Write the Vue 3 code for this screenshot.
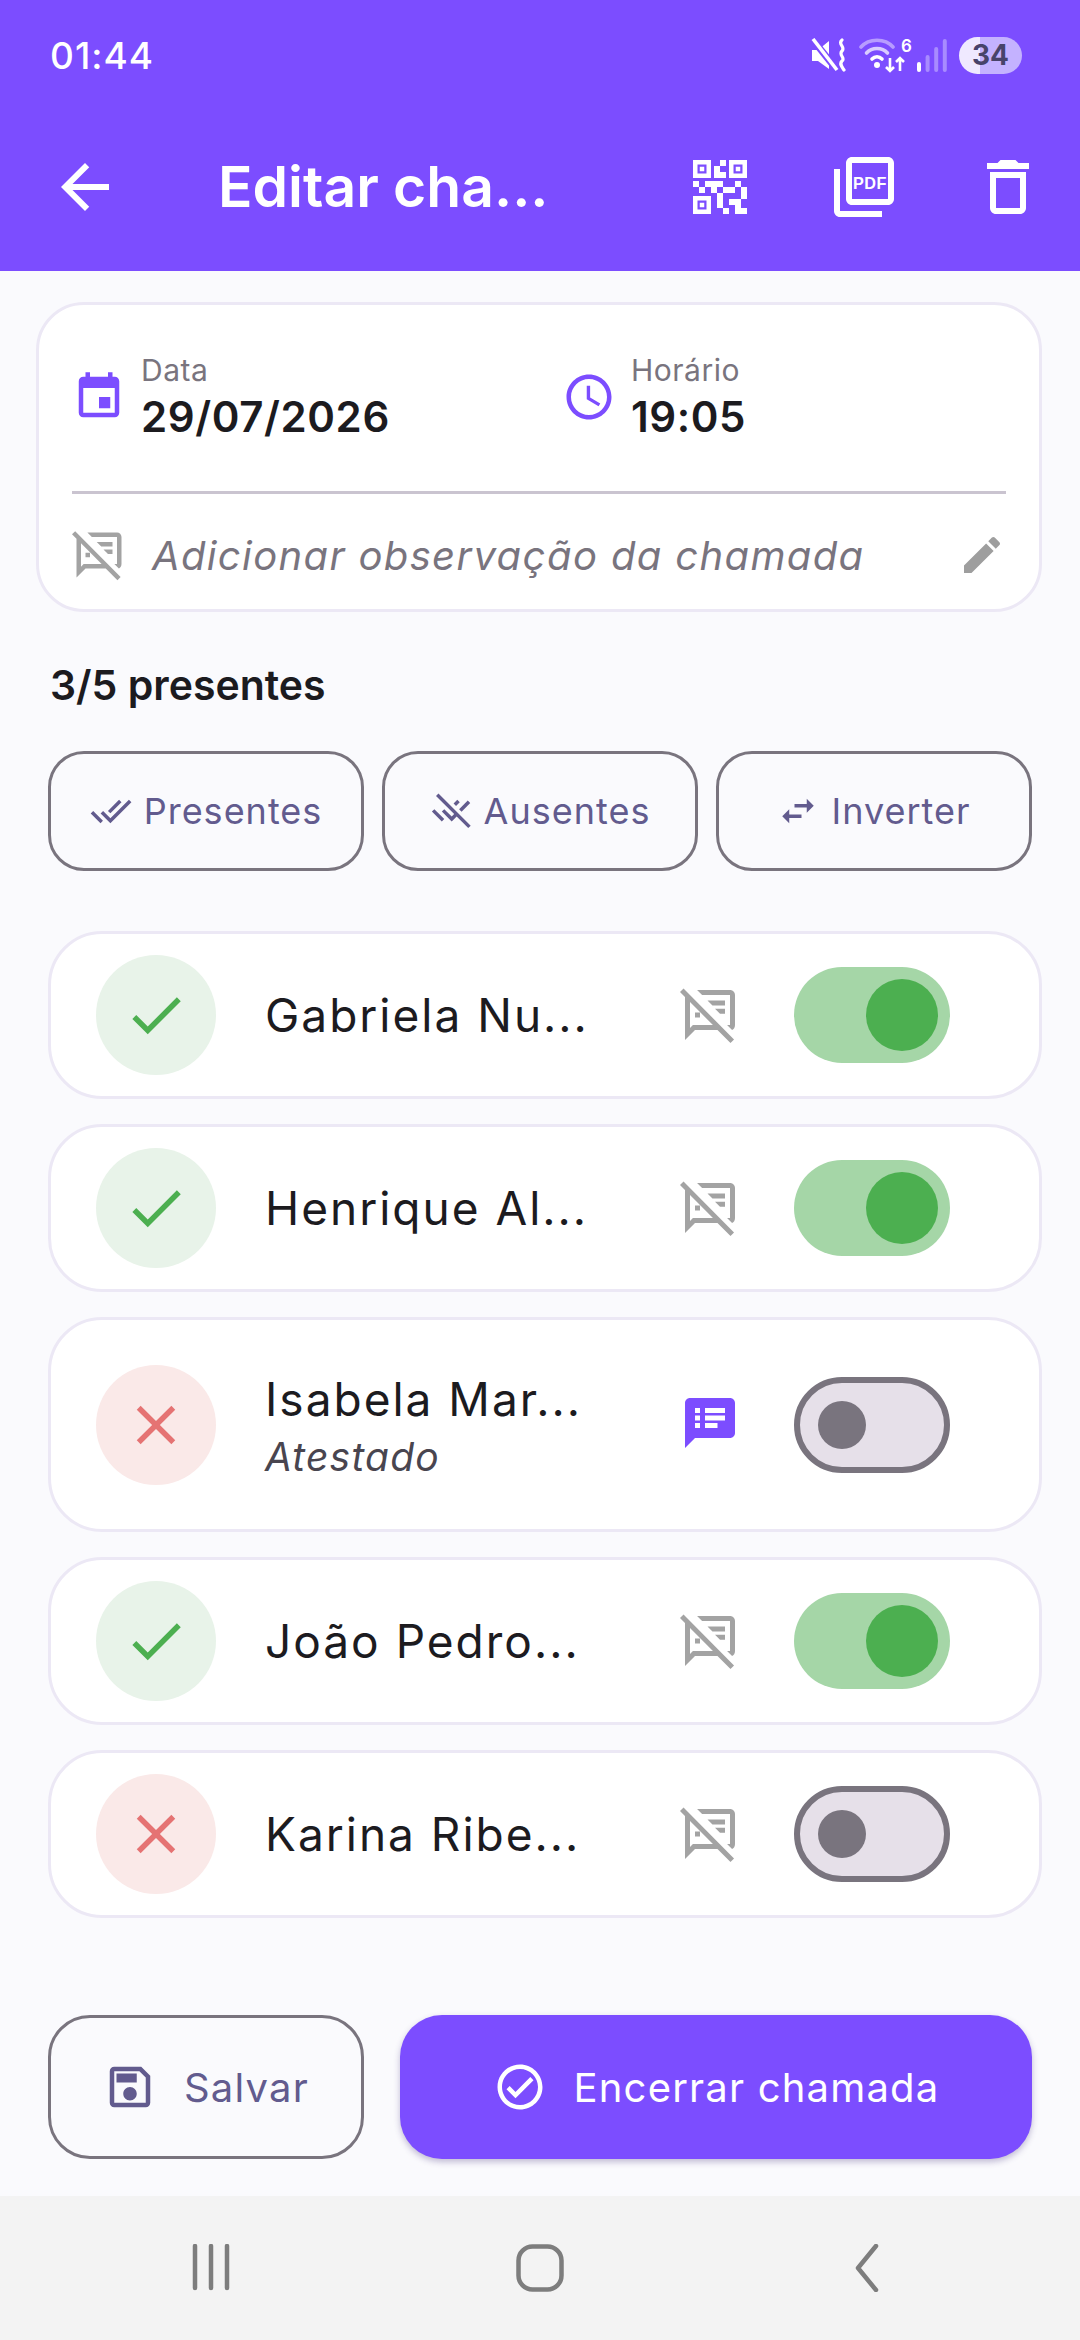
<script setup>
const students = [
  { id: 1, name: 'Gabriela Nu...', present: true, note: '' },
  { id: 2, name: 'Henrique Al...', present: true, note: '' },
  { id: 3, name: 'Isabela Mar...', present: false, note: 'Atestado' },
  { id: 4, name: 'João Pedro...', present: true, note: '' },
  { id: 5, name: 'Karina Ribe...', present: false, note: '' },
]

const notesOff = 'M20 2H6.83l2 2H20v12h-1.17l2 2c.7-.3 1.17-1 1.17-2V4c0-1.1-.9-2-2-2zM11 6.2h7v2h-5zM14 9.5h4v2h-2zM6 11h2v2H6zM1.41 1.39 0 2.8l2 2V22l4-4h9l5.2 5.2 1.41-1.41zM5.17 16 4 17.17V6.83L13.17 16z'
const notesOn = 'M20 2H4c-1.1 0-1.99.9-1.99 2L2 22l4-4h14c1.1 0 2-.9 2-2V4c0-1.1-.9-2-2-2zM8 14H6v-2h2v2zm0-3H6V9h2v2zm0-3H6V6h2v2zm7 6h-5v-2h5v2zm3-3h-8V9h8v2zm0-3h-8V6h8v2z'
</script>

<template>
  <div class="screen">
    <header class="top">
      <div class="status">
        <span class="clock">01:44</span>
        <div class="status-icons">
          <svg class="st-mute" viewBox="0 0 38 34" fill="none">
            <path d="M1 12h6l11-9v28L7 23H1z" fill="#fff" />
            <path d="M2 2l24 30" stroke="#7c4dff" stroke-width="7" />
            <path d="M2 1l24 31" stroke="#fff" stroke-width="3.6" />
            <path d="M31 2c-5 4 4 7 0 11-4 4 4 7 0 10-3 3 0 6 2 9" stroke="#fff" stroke-width="3.2" stroke-linecap="round" />
          </svg>
          <svg class="st-wifi" viewBox="0 0 48 36" fill="none">
            <path d="M2 10C10 1 26 1 34 10" stroke="#b79cff" stroke-width="3.6" stroke-linecap="round" />
            <path d="M7.5 16C13 10 23 10 28.5 16" stroke="#d9ccff" stroke-width="3.6" stroke-linecap="round" />
            <path d="M13 22c3-3 7-3 10 0" stroke="#fff" stroke-width="3.6" stroke-linecap="round" />
            <circle cx="18" cy="28" r="3" fill="#fff" />
            <path d="M31 21v13M27 30l4 4 4-4" stroke="#fff" stroke-width="2.6" />
            <path d="M41 34V21M37 25l4-4 4 4" stroke="#fff" stroke-width="2.6" />
          </svg>
          <span class="st-six">6</span>
          <svg class="st-signal" viewBox="0 0 30 34">
            <rect x="0" y="24" width="4" height="10" rx="2" fill="#fff" />
            <rect x="8.6" y="17" width="4" height="17" rx="2" fill="#a88bff" />
            <rect x="17.2" y="9" width="4" height="25" rx="2" fill="#a88bff" />
            <rect x="25.8" y="1" width="4" height="33" rx="2" fill="#a88bff" />
          </svg>
          <span class="battery">34</span>
        </div>
      </div>
      <div class="appbar">
        <button class="bar-btn back">
          <svg viewBox="0 0 24 24"><path d="M20 11H7.83l5.59-5.59L12 4l-8 8 8 8 1.41-1.41L7.83 13H20v-2z" /></svg>
        </button>
        <h1 class="title">Editar cha...</h1>
        <div class="bar-actions">
          <svg viewBox="0 0 24 24"><path d="M15 21h-2v-2h2v2zm-2-7h-2v5h2v-5zm8-2h-2v4h2v-4zm-2-2h-2v2h2v-2zM7 12H5v2h2v-2zm-2-2H3v2h2v-2zm7-5h2V3h-2v2zm-7.5-.5v3h3v-3h-3zM9 9H3V3h6v6zm-4.5 10.5v-3h3v3H4.5zM9 15H3v6h6v-6zm7.5-10.5v3h3v-3h-3zM21 9h-6V3h6v6zm-2 10v-3h-4v2h2v3h4v-2h-2zm-2-7h-4v2h4v-2zm-4-2H7v2h2v2h2v-2h2v-2zm1-1V7h-2V5h-2v4h4zM6.75 5.25h-1.5v1.5h1.5v-1.5zm0 12h-1.5v1.5h1.5v-1.5zm12-12h-1.5v1.5h1.5v-1.5z" /></svg>
          <svg viewBox="0 0 24 24">
            <path d="M20 2H8c-1.1 0-2 .9-2 2v12c0 1.1.9 2 2 2h12c1.1 0 2-.9 2-2V4c0-1.1-.9-2-2-2zm0 14H8V4h12v12zM4 6H2v14c0 1.1.9 2 2 2h14v-2H4V6z" />
            <text x="14" y="12.6" class="pdf">PDF</text>
          </svg>
          <svg viewBox="0 0 24 24"><path d="M6 19c0 1.1.9 2 2 2h8c1.1 0 2-.9 2-2V7H6v12zM8 9h8v10H8V9zm7.5-5l-1-1h-5l-1 1H5v2h14V4z" /></svg>
        </div>
      </div>
    </header>

    <main class="content">
      <section class="info-card">
        <div class="info-top">
          <div class="info-item date">
            <svg class="info-icon" viewBox="0 0 24 24"><path d="M17 12h-5v5h5v-5zM16 1v2H8V1H6v2H5c-1.11 0-1.99.9-1.99 2L3 19c0 1.1.89 2 2 2h14c1.1 0 2-.9 2-2V5c0-1.1-.9-2-2-2h-1V1h-2zm3 18H5V8h14v11z" /></svg>
            <div>
              <div class="info-label">Data</div>
              <div class="info-value">29/07/2026</div>
            </div>
          </div>
          <div class="info-item">
            <svg class="info-icon" viewBox="0 0 24 24"><path d="M11.99 2C6.47 2 2 6.48 2 12s4.47 10 9.99 10C17.52 22 22 17.52 22 12S17.52 2 11.99 2zM12 20c-4.42 0-8-3.58-8-8s3.58-8 8-8 8 3.58 8 8-3.58 8-8 8zm.5-13H11v6l5.25 3.15.75-1.23-4.5-2.67z" /></svg>
            <div>
              <div class="info-label">Horário</div>
              <div class="info-value">19:05</div>
            </div>
          </div>
        </div>
        <div class="divider"></div>
        <div class="obs">
          <svg class="obs-icon" viewBox="0 0 24 24"><path fill-rule="evenodd" :d="notesOff" /></svg>
          <span class="obs-text">Adicionar observação da chamada</span>
          <svg class="edit-icon" viewBox="0 0 24 24"><path d="M3 17.25V21h3.75L17.81 9.94l-3.75-3.75L3 17.25zM20.71 7.04c.39-.39.39-1.02 0-1.41l-2.34-2.34c-.39-.39-1.02-.39-1.41 0l-1.83 1.83 3.75 3.75 1.83-1.83z" /></svg>
        </div>
      </section>

      <div class="count">3/5 presentes</div>

      <div class="quick">
        <button class="quick-btn">
          <svg viewBox="0 0 24 24"><path d="M18 7l-1.41-1.41-6.34 6.34 1.41 1.41L18 7zm4.24-1.41L11.66 16.17 7.48 12l-1.41 1.41L11.66 19l12-12-1.42-1.41zM.41 13.41L6 19l1.41-1.41L1.83 12 .41 13.41z" /></svg>
          Presentes
        </button>
        <button class="quick-btn">
          <svg viewBox="0 0 24 24"><path d="M4.84 1.98L3.43 3.39l10.38 10.38-1.41 1.41-4.24-4.24-1.41 1.41 5.66 5.66 2.83-2.83 6.6 6.6 1.41-1.41L4.84 1.98zM18.05 12.36L23 7.4 21.57 6l-4.94 4.94 1.42 1.42zM17 7l-1.41-1.41-2.12 2.12 1.41 1.41L17 7zM1.08 12.35l5.66 5.66 1.41-1.41-5.66-5.66-1.41 1.41z" /></svg>
          Ausentes
        </button>
        <button class="quick-btn">
          <svg viewBox="0 0 24 24"><path d="M6.99 11L3 15l3.99 4v-3H14v-2H6.99v-3zM21 9l-4-4v3H10v2h7v3l4-4z" /></svg>
          Inverter
        </button>
      </div>

      <ul class="students">
        <li v-for="s in students" :key="s.id" class="student" :class="{ 'has-note': s.note }">
          <span class="mark" :class="s.present ? 'mark--on' : 'mark--off'">
            <svg v-if="s.present" viewBox="0 0 24 24"><path d="M9 16.17L4.83 12l-1.42 1.41L9 19 21 7l-1.41-1.41z" /></svg>
            <svg v-else viewBox="0 0 24 24"><path d="M19 6.41L17.59 5 12 10.59 6.41 5 5 6.41 10.59 12 5 17.59 6.41 19 12 13.41 17.59 19 19 17.59 13.41 12z" /></svg>
          </span>
          <div class="student-text">
            <div class="student-name">{{ s.name }}</div>
            <div v-if="s.note" class="student-note">{{ s.note }}</div>
          </div>
          <svg class="note-icon" :class="{ 'note-icon--on': s.note }" viewBox="0 0 24 24">
            <path fill-rule="evenodd" :d="s.note ? notesOn : notesOff" />
          </svg>
          <span class="switch" :class="s.present ? 'switch--on' : 'switch--off'"><i></i></span>
        </li>
      </ul>
    </main>

    <div class="actions">
      <button class="save">
        <svg viewBox="0 0 24 24"><path d="M17 3H5c-1.11 0-2 .9-2 2v14c0 1.1.89 2 2 2h14c1.1 0 2-.9 2-2V7l-4-4zm2 16H5V5h11.17L19 7.83V19zm-7-7c-1.66 0-3 1.34-3 3s1.34 3 3 3 3-1.34 3-3-1.34-3-3-3zM6 6h9v4H6z" /></svg>
        Salvar
      </button>
      <button class="finish">
        <svg viewBox="0 0 24 24"><path d="M12 2C6.48 2 2 6.48 2 12s4.48 10 10 10 10-4.48 10-10S17.52 2 12 2zm0 18c-4.41 0-8-3.59-8-8s3.59-8 8-8 8 3.59 8 8-3.59 8-8 8zm4.59-12.42L10 14.17l-2.59-2.58L6 13l4 4 8-8z" /></svg>
        Encerrar chamada
      </button>
    </div>

    <nav class="navbar">
      <svg viewBox="0 0 48 48" fill="none"><path d="M6 2v42M22 2v42M38 2v42" /></svg>
      <svg viewBox="0 0 48 48" fill="none"><rect x="2.5" y="2.5" width="43" height="43" rx="14" /></svg>
      <svg viewBox="0 0 48 48" fill="none"><path d="M33 2 15 24l18 22" /></svg>
    </nav>
  </div>
</template>

<style scoped>
.screen {
  width: 1080px;
  height: 2340px;
  display: flex;
  flex-direction: column;
  background: #fafafd;
  font-family: Inter, "Noto Sans", sans-serif;
  color: #1c1b1f;
  overflow: hidden;
}

button {
  font-family: inherit;
  background: none;
  border: 0;
  padding: 0;
}

.top {
  height: 271px;
  background: #7c4dff;
  color: #fff;
  flex-shrink: 0;
}

.status {
  height: 110px;
  padding: 0 58px 0 50px;
  display: flex;
  align-items: center;
  justify-content: space-between;
}

.clock {
  font-size: 37px;
  font-weight: 500;
  letter-spacing: 1px;
}

.status-icons {
  display: flex;
  align-items: center;
  position: relative;
}

.st-mute {
  width: 38px;
  height: 34px;
}

.st-wifi {
  width: 48px;
  height: 36px;
  margin-left: 10px;
}

.st-six {
  position: absolute;
  left: 90px;
  top: 0;
  font-size: 17px;
  font-weight: 600;
  line-height: 18px;
}

.st-signal {
  width: 30px;
  height: 34px;
  margin-left: 10px;
}

.battery {
  width: 63px;
  height: 37px;
  margin-left: 12px;
  border-radius: 19px;
  background: linear-gradient(90deg, #efe9ff 33%, #c4b2ff 33%);
  color: #48436a;
  font-size: 28px;
  font-weight: 700;
  line-height: 37px;
  text-align: center;
}

.appbar {
  height: 154px;
  display: flex;
  align-items: center;
  padding: 0 36px 0 49px;
}

.bar-btn {
  width: 72px;
  height: 72px;
  margin-right: 97px;
}

.appbar svg {
  display: block;
  width: 72px;
  height: 72px;
  fill: #fff;
}

.title {
  flex: 1;
  margin: 0;
  font-size: 57px;
  font-weight: 600;
  line-height: 72px;
}

.bar-actions {
  display: flex;
  gap: 72px;
}

.pdf {
  font-family: "Liberation Sans Narrow", "Liberation Sans", sans-serif;
  font-size: 5.4px;
  font-weight: 700;
  text-anchor: middle;
  letter-spacing: 0.2px;
}

.content {
  flex: 1;
  min-height: 0;
  padding: 31px 38px 0 36px;
}

.info-card {
  height: 310px;
  box-sizing: border-box;
  padding: 42px 33px 0 33px;
  background: #fff;
  border: 3px solid #ece8f5;
  border-radius: 48px;
}

.info-top {
  display: flex;
  height: 144px;
}

.info-item {
  display: flex;
  align-items: center;
  gap: 15px;
  height: 100px;
}

.info-item.date {
  width: 490px;
}

.info-icon {
  width: 54px;
  height: 54px;
  fill: #7c4dff;
}

.info-label {
  font-size: 30px;
  line-height: 40px;
  color: #79747e;
  letter-spacing: 0.5px;
}

.info-value {
  font-size: 42px;
  font-weight: 600;
  line-height: 54px;
  letter-spacing: 0.6px;
}

.divider {
  height: 3px;
  background: #cac4d0;
}

.obs {
  display: flex;
  align-items: center;
  margin-top: 34px;
  height: 54px;
}

.obs-icon {
  width: 54px;
  height: 54px;
  fill: #a3a3a3;
  margin-right: 26px;
}

.obs-text {
  flex: 1;
  font-size: 40px;
  font-style: italic;
  color: #79747e;
  letter-spacing: 1.35px;
}

.edit-icon {
  width: 48px;
  height: 48px;
  fill: #9e9e9e;
}

.count {
  margin: 46px 0 0 14px;
  font-size: 41px;
  font-weight: 600;
  line-height: 54px;
}

.quick {
  display: flex;
  gap: 18px;
  margin: 39px 0 0 12px;
}

.quick-btn {
  width: 316px;
  height: 120px;
  box-sizing: border-box;
  display: flex;
  align-items: center;
  justify-content: center;
  gap: 12px;
  border: 3px solid #79747e;
  border-radius: 36px;
  font-size: 36px;
  letter-spacing: 1px;
  color: #625b8e;
}

.quick-btn svg {
  width: 42px;
  height: 42px;
  fill: #625b8e;
}

.students {
  list-style: none;
  margin: 60px 0 0 12px;
  padding: 0;
  display: flex;
  flex-direction: column;
  gap: 25px;
}

.student {
  height: 168px;
  box-sizing: border-box;
  display: flex;
  align-items: center;
  padding: 0 0 0 45px;
  background: #fff;
  border: 3px solid #ece8f5;
  border-radius: 54px;
}

.student.has-note {
  height: 215px;
}

.mark {
  width: 120px;
  height: 120px;
  border-radius: 50%;
  display: flex;
  align-items: center;
  justify-content: center;
  flex-shrink: 0;
}

.mark svg {
  width: 66px;
  height: 66px;
}

.mark--on {
  background: #e8f3e9;
}

.mark--on svg {
  fill: #4caf50;
}

.mark--off {
  background: #fae9e8;
}

.mark--off svg {
  fill: #e57373;
}

.student-text {
  width: 415px;
  margin-left: 49px;
}

.student-name {
  font-size: 46px;
  line-height: 64px;
  letter-spacing: 2px;
}

.student-note {
  font-size: 39px;
  font-style: italic;
  line-height: 52px;
  color: #49454f;
  letter-spacing: 1.2px;
}

.note-icon {
  width: 60px;
  height: 60px;
  fill: #a3a3a3;
  flex-shrink: 0;
}

.note-icon--on {
  fill: #7c4dff;
  margin-top: -2px;
}

.has-note .note-icon {
  margin-top: -4px;
}

.switch {
  width: 156px;
  height: 96px;
  box-sizing: border-box;
  margin-left: 54px;
  border-radius: 48px;
  display: flex;
  align-items: center;
  flex-shrink: 0;
}

.switch i {
  display: block;
  border-radius: 50%;
}

.switch--on {
  background: #a5d6a7;
  justify-content: flex-end;
  padding-right: 12px;
}

.switch--on i {
  width: 72px;
  height: 72px;
  background: #4caf50;
}

.switch--off {
  background: #e6e0e9;
  border: 6px solid #79747e;
  padding-left: 18px;
}

.switch--off i {
  width: 48px;
  height: 48px;
  background: #79747e;
}

.actions {
  height: 181px;
  box-sizing: border-box;
  padding: 0 48px;
  display: flex;
  gap: 36px;
  flex-shrink: 0;
}

.save,
.finish {
  height: 144px;
  display: flex;
  align-items: center;
  justify-content: center;
  gap: 27px;
  box-sizing: border-box;
  font-size: 40px;
  letter-spacing: 1.2px;
}

.save {
  width: 316px;
  border: 3px solid #79747e;
  border-radius: 42px;
  color: #625b8e;
}

.save svg {
  width: 54px;
  height: 54px;
  fill: #625b8e;
}

.finish {
  flex: 1;
  border-radius: 42px;
  background: #7c4dff;
  color: #fff;
  box-shadow: 0 3px 6px rgba(60, 40, 120, 0.3);
}

.finish svg {
  width: 54px;
  height: 54px;
  fill: #fff;
}

.navbar {
  height: 144px;
  background: #f3f3f3;
  flex-shrink: 0;
  display: flex;
  align-items: center;
  justify-content: center;
  padding-bottom: 0;
  gap: 279px;
}

.navbar svg {
  width: 48px;
  height: 48px;
  stroke: #7d7d7d;
  stroke-width: 4.5;
  stroke-linecap: round;
  stroke-linejoin: round;
}
</style>
